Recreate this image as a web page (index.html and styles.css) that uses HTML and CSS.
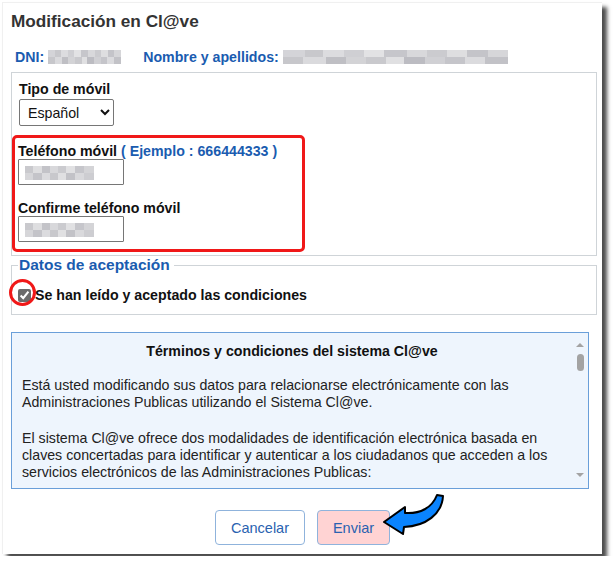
FILE: index.html
```html
<!DOCTYPE html>
<html lang="es">
<head>
    <meta charset="UTF-8">
    <meta name="viewport" content="width=device-width, initial-scale=1.0">
    <title>Modificación en Cl@ve</title>
    <link rel="stylesheet" href="styles.css">
</head>
<body>
  <div class="frame">
    <h1 class="title">Modificación en Cl@ve</h1>

    <div class="ident">
      <span class="lbl">DNI:</span>
      <span class="blur blur-dni"></span>
      <span class="lbl lbl-name">Nombre y apellidos:</span>
      <span class="blur blur-name"></span>
    </div>

    <fieldset class="box phone-box">
      <div class="field">
        <label for="tipo">Tipo de móvil</label>
        <select id="tipo" class="select">
          <option>Español</option>
          <option>Extranjero</option>
        </select>
      </div>

      <div class="highlight">
        <div class="field">
          <label for="tel">Teléfono móvil <span class="hint">( Ejemplo : 666444333 )</span></label>
          <input id="tel" type="text" class="text-input" />
        </div>
        <div class="field">
          <label for="tel2">Confirme teléfono móvil</label>
          <input id="tel2" type="text" class="text-input" />
        </div>
      </div>
    </fieldset>

    <fieldset class="box accept-box">
      <legend>Datos de aceptación</legend>
      <label class="check">
        <span class="check-wrap">
          <input type="checkbox" checked />
          <span class="ring"></span>
        </span>
        Se han leído y aceptado las condiciones
      </label>
    </fieldset>

    <div class="terms">
      <div class="terms-text">
        <h2>Términos y condiciones del sistema Cl@ve</h2>
        <p>Está usted modificando sus datos para relacionarse electrónicamente con las Administraciones Publicas utilizando el Sistema Cl@ve.</p>
        <p>El sistema Cl@ve ofrece dos modalidades de identificación electrónica basada en claves concertadas para identificar y autenticar a los ciudadanos que acceden a los servicios electrónicos de las Administraciones Publicas:</p>
      </div>
      <div class="scrollbar">
        <span class="arrow arrow-up"></span>
        <span class="thumb"></span>
        <span class="arrow arrow-down"></span>
      </div>
    </div>

    <div class="actions">
      <button type="button" class="btn btn-cancel">Cancelar</button>
      <button type="button" class="btn btn-send">Enviar</button>
      <svg class="pointer" width="70" height="50" viewBox="0 0 70 50">
        <path d="M4 32 L25 17 L25 23 C40 24 52 18 57 5 L63 6 C62 24 46 36 24 37 L23 44 Z"
              fill="#0a84ff" stroke="#000" stroke-width="2" stroke-linejoin="round" />
      </svg>
    </div>
  </div>
</body>
</html>
```

FILE: styles.css
```css
html, body {
    margin: 0;
    padding: 0;
    background-color: #ffffff;
    font-family: 'Liberation Sans', Arial, sans-serif;
    color: #111;
}

/* Screenshot frame */
.frame {
    position: relative;
    width: 600px;
    height: 552px;
    margin: 2px;
    background-color: #fff;
    border-top: 1px solid #f0f0f0;
    border-left: 1px solid #f0f0f0;
    box-sizing: border-box;
    box-shadow: 5px 5px 4px rgba(0, 0, 0, 0.7);
}

.title {
    margin: 0;
    padding: 8px 0 0 8px;
    font-size: 17.2px;
    font-weight: bold;
    color: #333;
}

/* Identity row */
.ident {
    display: flex;
    align-items: center;
    padding: 17px 0 0 12px;
    font-size: 14.2px;
}

.lbl {
    color: #1a5cb0;
    font-weight: bold;
}

.lbl-name {
    margin-left: 22px;
}

.blur {
    display: inline-block;
    height: 14px;
    margin-left: 4px;
    background:
        linear-gradient(90deg, #d4d4d8 0 10%, #c8c8cc 10% 18%, #dcdcdf 18% 27%, #cfcfd3 27% 36%, #e2e2e4 36% 45%, #c6c6cb 45% 55%, #d8d8db 55% 64%, #cbcbcf 64% 73%, #dedee0 73% 82%, #c4c4c9 82% 91%, #d6d6d9 91% 100%) top / 100% 50% no-repeat,
        linear-gradient(90deg, #c7c7cb 0 9%, #dadadd 9% 19%, #bfbfc4 19% 28%, #d3d3d6 28% 37%, #c9c9cd 37% 46%, #e0e0e2 46% 54%, #bcbcc2 54% 63%, #d0d0d4 63% 72%, #c5c5ca 72% 81%, #dbdbde 81% 90%, #c2c2c7 90% 100%) bottom / 100% 50% no-repeat;
}

.blur-dni {
    width: 73px;
}

.blur-name {
    width: 225px;
}

/* Boxes */
.box {
    margin: 0 0 0 8px;
    width: 586px;
    box-sizing: border-box;
    border: 1px solid #cfd4d8;
    padding: 0;
}

.phone-box {
    margin-top: 7px;
    padding: 8px 0 3px 0;
}

.field {
    display: flex;
    flex-direction: column;
    align-items: flex-start;
    padding: 0 7px;
    font-size: 14.2px;
}

.field label {
    font-weight: bold;
    margin-bottom: 2px;
}

.hint {
    color: #1a5cb0;
}

.select {
    width: 95px;
    height: 27px;
    font-family: 'Liberation Sans', Arial, sans-serif;
    font-size: 14.2px;
    color: #111;
    border: 1px solid #767676;
    border-radius: 2px;
    background: #fff;
    padding: 0 4px;
}

.highlight {
    width: 293px;
    margin-top: 9px;
    padding: 5px 0 7px 0;
    border: 3px solid #f01818;
    border-radius: 5px;
    box-sizing: border-box;
    display: flex;
    flex-direction: column;
    gap: 15px;
}

.highlight .field {
    padding-left: 3px;
}

.highlight .field label {
    margin-bottom: 0;
}

.text-input {
    width: 106px;
    height: 26px;
    box-sizing: border-box;
    border: 1px solid #767676;
    border-radius: 1px;
    background:
        linear-gradient(90deg, #c9c9cd 0 12%, #dedee0 12% 24%, #c3c3c8 24% 36%, #d8d8db 36% 48%, #cbcbcf 48% 60%, #e1e1e3 60% 72%, #c6c6cb 72% 86%, #d4d4d7 86% 100%) 6px 6px / 69px 7px no-repeat,
        linear-gradient(90deg, #d6d6d9 0 12%, #c4c4c9 12% 24%, #dbdbde 24% 36%, #c8c8cc 36% 48%, #e0e0e2 48% 60%, #c2c2c7 60% 72%, #d9d9dc 72% 86%, #cdcdd1 86% 100%) 6px 13px / 69px 7px no-repeat,
        #fff;
}

/* Acceptance */
.accept-box {
    margin-top: 0;
    padding: 13px 0 11px 6px;
}

.accept-box legend {
    margin-left: 0;
    padding: 0 4px 0 1px;
    color: #1a5cb0;
    font-weight: bold;
    font-size: 15.5px;
}

.check {
    display: flex;
    align-items: center;
    gap: 4px;
    font-size: 14.2px;
    font-weight: bold;
}

.check-wrap {
    position: relative;
    display: inline-flex;
}

.check-wrap input {
    margin: 0;
    width: 13px;
    height: 13px;
    accent-color: #6b6b6b;
}

.ring {
    position: absolute;
    left: -9px;
    top: -10px;
    width: 27px;
    height: 27px;
    box-sizing: border-box;
    border: 3px solid #f01818;
    border-radius: 50%;
}

/* Terms box */
.terms {
    display: flex;
    margin: 17px 0 0 8px;
    width: 578px;
    height: 157px;
    box-sizing: border-box;
    border: 1px solid #6a9fd9;
    background-color: #eef5fd;
}

.terms-text {
    flex: 1;
    overflow-y: auto;
    scrollbar-width: none;
    padding: 0 10px;
    font-size: 14.2px;
    line-height: 17px;
    color: #222;
}

.terms-text h2 {
    margin: 10px 0 17px;
    text-align: center;
    font-size: 14.2px;
    color: #111;
}

.terms-text p {
    margin: 0 0 19px;
}

.scrollbar {
    width: 16px;
    display: flex;
    flex-direction: column;
    align-items: center;
    padding: 10px 0 11px;
    box-sizing: border-box;
}

.arrow {
    width: 0;
    height: 0;
    border-left: 4px solid transparent;
    border-right: 4px solid transparent;
}

.arrow-up {
    border-bottom: 4px solid #a3a3a3;
}

.arrow-down {
    margin-top: auto;
    border-top: 4px solid #a3a3a3;
}

.thumb {
    margin-top: 7px;
    width: 7px;
    height: 17px;
    border-radius: 4px;
    background-color: #a3a3a3;
}

/* Buttons */
.actions {
    position: relative;
    display: flex;
    justify-content: center;
    gap: 12px;
    padding-top: 21px;
}

.btn {
    height: 35px;
    padding: 0;
    border: 1px solid #8fb3dc;
    border-radius: 4px;
    background-color: #fff;
    color: #2a62b0;
    font-family: 'Liberation Sans', Arial, sans-serif;
    font-size: 14.5px;
    cursor: pointer;
}

.btn-cancel {
    width: 90px;
}

.btn-send {
    width: 73px;
    background-color: #ffd3d3;
}

.pointer {
    position: absolute;
    left: 377px;
    top: 1px;
}
```
